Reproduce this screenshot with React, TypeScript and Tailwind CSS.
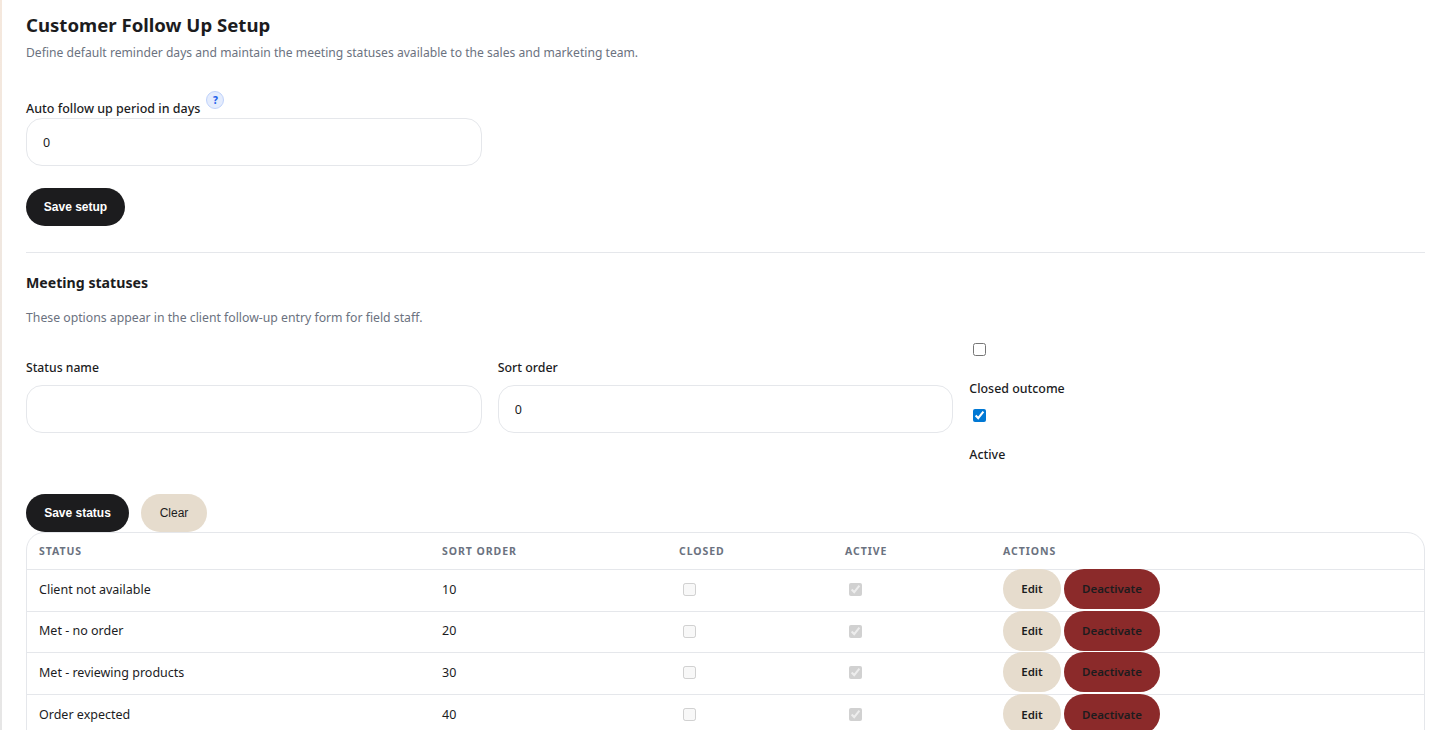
const statuses = [
  { name: 'Client not available', order: 10, h: 'h-[42px]' },
  { name: 'Met - no order', order: 20, h: 'h-[41px]' },
  { name: 'Met - reviewing products', order: 30, h: 'h-[42px]' },
  { name: 'Order expected', order: 40, h: 'h-[42px]' },
]

const headCell = 'px-3 pt-[2px] text-left align-middle text-[10.5px] font-bold uppercase tracking-[0.09em] text-[#6b7280]'
const inputCls = 'block h-12 w-full rounded-2xl border border-[#e5e7eb] bg-white px-4 text-[12.5px] text-[#1c1c1e] outline-none'
const labelCls = 'block font-medium leading-[17px] text-[#1c1c1e]'
const arial = 'font-["Liberation_Sans",Arial,sans-serif]'

const App = () => {
  return (
    <div className="h-[730px] overflow-hidden bg-gradient-to-b from-[#f5e8dd] to-[#e6e6e6] pl-[2px]">
      <div className='h-full bg-white pl-6 pr-[13px] font-["Noto_Sans",sans-serif] text-[#1c1c1e]'>
        <h1 className="pt-3 text-[18.6px] font-bold leading-[26px]">Customer Follow Up Setup</h1>
        <p className="mt-[6px] text-[12.14px] leading-[18px] text-[#6b7280]">
          Define default reminder days and maintain the meeting statuses available to the sales and marketing team.
        </p>

        <div className="mt-[29px] flex items-start">
          <label className={labelCls + ' pt-[9px] text-[12.5px]'}>Auto follow up period in days</label>
          <span className="ml-[6px] flex h-[18px] w-[18px] items-center justify-center rounded-full border border-[#bfd2fb] bg-[#e4ecfd] text-[10px] font-extrabold leading-none text-[#2563eb]">
            ?
          </span>
        </div>
        <div className="mt-px w-[456px]">
          <input className={inputCls} defaultValue="0" readOnly />
        </div>

        <button className={`mt-[22px] block h-[38px] w-[99px] rounded-[19px] bg-[#1c1c1e] text-[12px] font-bold text-white ${arial}`}>
          Save setup
        </button>

        <hr className="mt-[26px] border-t border-[#e5e7eb]" />

        <h2 className="mt-[20px] text-[14.15px] font-bold leading-5">Meeting statuses</h2>
        <p className="mt-[16px] text-[12.25px] leading-[18px] text-[#6b7280]">
          These options appear in the client follow-up entry form for field staff.
        </p>

        <div className="mt-[16px] grid grid-cols-3 gap-4">
          <div className="pt-[16px]">
            <label className={labelCls + ' text-[12.2px]'}>Status name</label>
            <input className={inputCls + ' mt-[9px]'} />
          </div>
          <div className="pt-[16px]">
            <label className={labelCls + ' text-[12.4px]'}>Sort order</label>
            <input className={inputCls + ' mt-[9px]'} defaultValue="0" readOnly />
          </div>
          <div>
            <input type="checkbox" className="ml-1 block h-[13px] w-[13px]" />
            <label className={labelCls + ' mt-[24px] text-[12.4px]'}>Closed outcome</label>
            <input type="checkbox" defaultChecked className="mt-[12px] ml-1 block h-[13px] w-[13px] accent-[#0078d4]" />
            <label className={labelCls + ' mt-[24px] text-[12.4px]'}>Active</label>
          </div>
        </div>

        <div className="mt-[31px] flex gap-3">
          <button className={`h-[38px] w-[103px] rounded-[19px] bg-[#1c1c1e] text-[12px] font-bold text-white ${arial}`}>
            Save status
          </button>
          <button className={`h-[38px] w-[66px] rounded-[19px] bg-[#e6dccd] text-[12px] text-[#1c1c1e] ${arial}`}>
            Clear
          </button>
        </div>

        <div className="overflow-hidden rounded-t-[18px] border border-[#e5e7eb]">
          <table className="w-full table-fixed border-collapse text-[12.5px]">
            <colgroup>
              <col className="w-[403px]" />
              <col className="w-[237px]" />
              <col className="w-[166px]" />
              <col className="w-[158px]" />
              <col />
            </colgroup>
            <thead>
              <tr className="h-9">
                <th className={headCell}>Status</th>
                <th className={headCell}>Sort order</th>
                <th className={headCell}>Closed</th>
                <th className={headCell}>Active</th>
                <th className={headCell}>Actions</th>
              </tr>
            </thead>
            <tbody>
              {statuses.map((s) => (
                <tr key={s.name} className={`border-t border-[#e5e7eb] ${s.h}`}>
                  <td className="px-3">{s.name}</td>
                  <td className="px-3">{s.order}</td>
                  <td className="px-3 pb-px">
                    <input type="checkbox" disabled className="ml-1 block h-[13px] w-[13px]" />
                  </td>
                  <td className="px-3 pb-px">
                    <input type="checkbox" disabled defaultChecked className="ml-1 block h-[13px] w-[13px]" />
                  </td>
                  <td className="px-3">
                    <div className="-mt-[2px] flex gap-[3px]">
                      <button className="h-10 w-[58px] rounded-[20px] bg-[#e6dccd] text-[11.5px] font-semibold text-[#1c1c1e]">Edit</button>
                      <button className="h-10 w-[96px] rounded-[20px] bg-[#8b2a2a] text-[11.5px] font-semibold text-[#1c1c1e]">Deactivate</button>
                    </div>
                  </td>
                </tr>
              ))}
            </tbody>
          </table>
        </div>
      </div>
    </div>
  )
}

export default App
